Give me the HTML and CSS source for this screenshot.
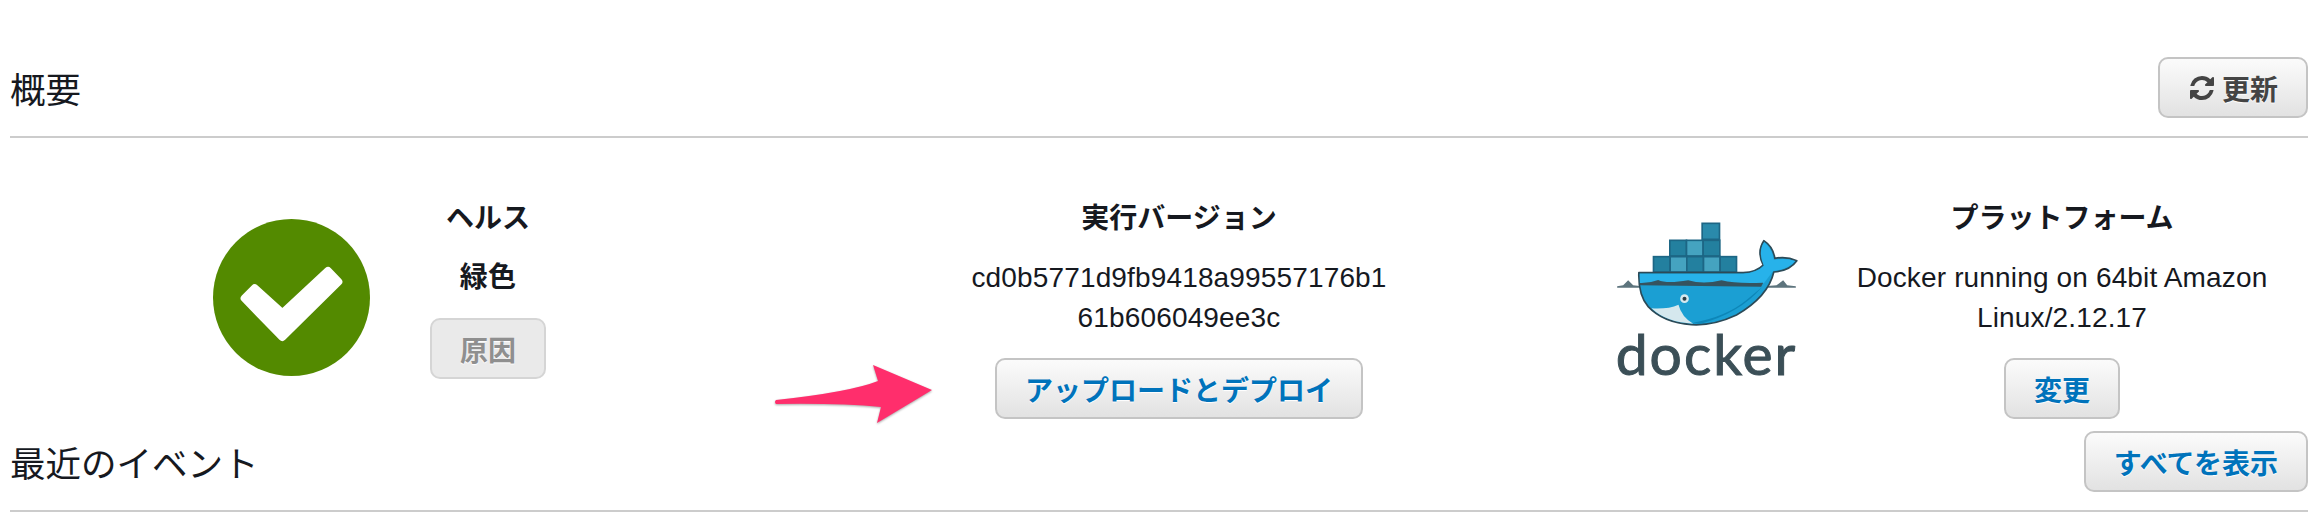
FILE: index.html
```html
<!DOCTYPE html>
<html lang="ja">
<head>
    <meta charset="UTF-8">
    <meta name="viewport" content="width=device-width, initial-scale=1.0">
    <title>概要</title>
    <link rel="stylesheet" href="styles.css">
</head>
<body>
    <header class="section-header">
        <h2>概要</h2>
        <button class="btn btn-plain">
            <svg class="refresh-icon" viewBox="0 0 1792 1792"><path d="M1639 1056q0 5-1 7-64 268-268 434.500t-478 166.500q-146 0-282.500-55t-243.500-157l-129 129q-19 19-45 19t-45-19-19-45v-448q0-26 19-45t45-19h448q26 0 45 19t19 45-19 45l-137 137q71 66 161 102t187 36q134 0 250-65t186-179q11-17 53-117 8-23 30-23h192q13 0 22.500 9.500t9.500 22.500zm25-800v448q0 26-19 45t-45 19h-448q-26 0-45-19t-19-45 19-45l138-138q-148-137-349-137-134 0-250 65t-186 179q-11 17-53 117-8 23-30 23h-199q-13 0-22.500-9.500t-9.500-22.500v-7q65-268 270-434.500t480-166.500q146 0 284 55.500t245 156.500l130-129q19-19 45-19t45 19 19 45z"/></svg>
            更新
        </button>
    </header>

    <div class="overview">
        <svg class="health-icon" viewBox="100 87 471 471">
            <circle cx="335.500" cy="322.500" r="235.500" fill="#538a00"/>
            <path d="M225 295 L195 325 L308 441 L476 275 L445 243 L308 370 Z" fill="#fff" stroke="#fff" stroke-width="24" stroke-linejoin="round"/>
        </svg>
        <div class="info info-health">
            <h3>ヘルス</h3>
            <p class="value"><b>緑色</b></p>
            <button class="btn btn-disabled">原因</button>
        </div>

        <div class="info info-version">
            <h3>実行バージョン</h3>
            <p class="value">cd0b5771d9fb9418a99557176b1<br>61b606049ee3c</p>
            <button class="btn btn-link">アップロードとデプロイ</button>
        </div>

        <div class="docker-logo">
            <svg class="docker-whale" viewBox="160 60 560 336">
                <!-- containers -->
                <g stroke="#1d6685" stroke-width="5">
                    <rect x="427" y="70" width="52" height="48" fill="#2a8aab"/>
                    <rect x="330" y="121" width="50" height="47" fill="#23809f"/>
                    <rect x="380" y="121" width="50" height="47" fill="#45a3c0"/>
                    <rect x="430" y="121" width="50" height="47" fill="#23809f"/>
                    <rect x="281" y="170" width="50" height="46" fill="#23809f"/>
                    <rect x="331" y="170" width="50" height="46" fill="#45a3c0"/>
                    <rect x="381" y="170" width="50" height="46" fill="#23809f"/>
                    <rect x="431" y="170" width="50" height="46" fill="#45a3c0"/>
                    <rect x="481" y="170" width="49" height="46" fill="#23809f"/>
                </g>
                <!-- water -->
                <path d="M172 259 L190 256 L205 241 L220 256 L240 258 L240 263 L172 263 Z" fill="#5d747d"/>
                <path d="M612 259 L650 256 L670 241 L682 256 L708 259 L708 263 L612 263 Z" fill="#5d747d"/>
                <!-- whale -->
                <path d="M237 218 L550 218 Q590 216 610 195 Q590 155 612 122 Q640 140 645 175 Q680 168 711 182 Q690 212 642 216 Q625 290 530 345 Q460 378 395 374 Q310 368 265 320 Q235 285 237 218 Z" fill="#1b9fd3" stroke="#2c4a57" stroke-width="5" stroke-linejoin="round"/>
                <path d="M240 221 L550 221 Q592 218 612 197 Q594 155 613 127 Q636 145 642 180 Q676 172 706 183 Q686 208 640 213 L612 250 L240 250 Z" fill="#27b2ea"/>
                <path d="M240 256 L240 249 Q270 250 295 240 Q320 252 385 241 Q430 254 485 241 Q530 252 610 248 L604 260 Z" fill="#35535f"/>
                <path d="M420 372 Q540 340 606 262 L560 300 Q500 350 400 368 Z" fill="#0d86b8"/>
                <path d="M275 325 Q325 328 356 314 Q365 350 400 371 Q320 368 275 325 Z" fill="#d5e8ee"/>
                <circle cx="374" cy="296" r="13" fill="#d5e8ee"/>
                <circle cx="374" cy="296" r="6" fill="#2c3e46"/>
            </svg>
            <span class="docker-word">docker</span>
        </div>
        <div class="info info-platform">
            <h3>プラットフォーム</h3>
            <p class="value">Docker running on 64bit Amazon Linux/2.12.17</p>
            <button class="btn btn-link">変更</button>
        </div>
    </div>

    <header class="section-header">
        <h2>最近のイベント</h2>
        <button class="btn btn-link">すべてを表示</button>
    </header>

    <!-- annotation on top of the screenshot -->
    <svg class="arrow" viewBox="770 360 170 70">
        <path d="M776 400 Q850 392 878 381 L873 365 L932 390 L877 423 L881 407 Q840 403 776 404 Q774 402 776 400 Z"/>
    </svg>
</body>
</html>
```

FILE: styles.css
```css
body {
    margin: 0;
    height: 524px;
    overflow: hidden;
    background: #fff;
    color: #16191f;
    font-family: "Liberation Sans", "Noto Sans CJK JP", sans-serif;
    font-size: 28px;
}
.section-header {
    display: flex;
    justify-content: space-between;
    align-items: center;
    margin-left: 10px;
    padding-bottom: 18px;
    border-bottom: 2px solid #ccc;
}
.section-header:first-child {
    padding-top: 57px;
}
.section-header h2 {
    margin: 0;
    font-size: 35.5px;
    font-weight: 400;
}
.overview {
    display: flex;
    align-items: flex-start;
    height: 293px;
    padding-left: 213px;
}
.health-icon {
    flex: none;
    width: 157px;
    height: 157px;
    margin-top: 81px;
}
.docker-logo {
    flex: none;
    display: flex;
    flex-direction: column;
    align-items: center;
    width: 187px;
    margin-top: 82px;
    margin-left: 223px;
}
.docker-whale {
    width: 187px;
    height: 112px;
}
.docker-word {
    margin-top: -3px;
    color: #3b4f57;
    font-family: "Lato", sans-serif;
    font-size: 57px;
    line-height: 48px;
    letter-spacing: 2px;
    -webkit-text-stroke: 1px #3b4f57;
}
.info {
    flex: none;
    padding-top: 61px;
    text-align: center;
}
.info h3 {
    margin: 0 0 19px;
    font-size: 28px;
    line-height: 40px;
    font-weight: 700;
}
.info .value {
    margin: 0 0 20px;
    line-height: 40px;
    letter-spacing: 0.15px;
}
.info-health {
    width: 236px;
}
.info-version {
    width: 422px;
    margin-left: 362px;
}
.info-platform {
    width: 430px;
    margin-left: 47px;
}
.btn {
    height: 61px;
    padding: 0 28px;
    border: 2px solid #c4c4c4;
    border-radius: 10px;
    background: linear-gradient(to bottom, #fbfbfb, #e2e2e2);
    font-family: inherit;
    font-size: 28px;
    font-weight: 700;
    text-shadow: 0 1px 1px #fff;
    cursor: pointer;
}
.btn-link {
    color: #0073bb;
}
.btn-plain {
    display: flex;
    align-items: center;
    gap: 6px;
    color: #444;
}
.btn-disabled {
    background: #eaeaea;
    border-color: #d5d5d5;
    color: #8f8f8f;
    cursor: default;
}
.refresh-icon {
    width: 28px;
    height: 28px;
    fill: #444;
}
.arrow {
    position: absolute;
    left: 770px;
    top: 360px;
    width: 170px;
    height: 70px;
    fill: #ff2e6c;
    filter: drop-shadow(0 1px 1px rgba(0, 0, 0, 0.35));
}
```
